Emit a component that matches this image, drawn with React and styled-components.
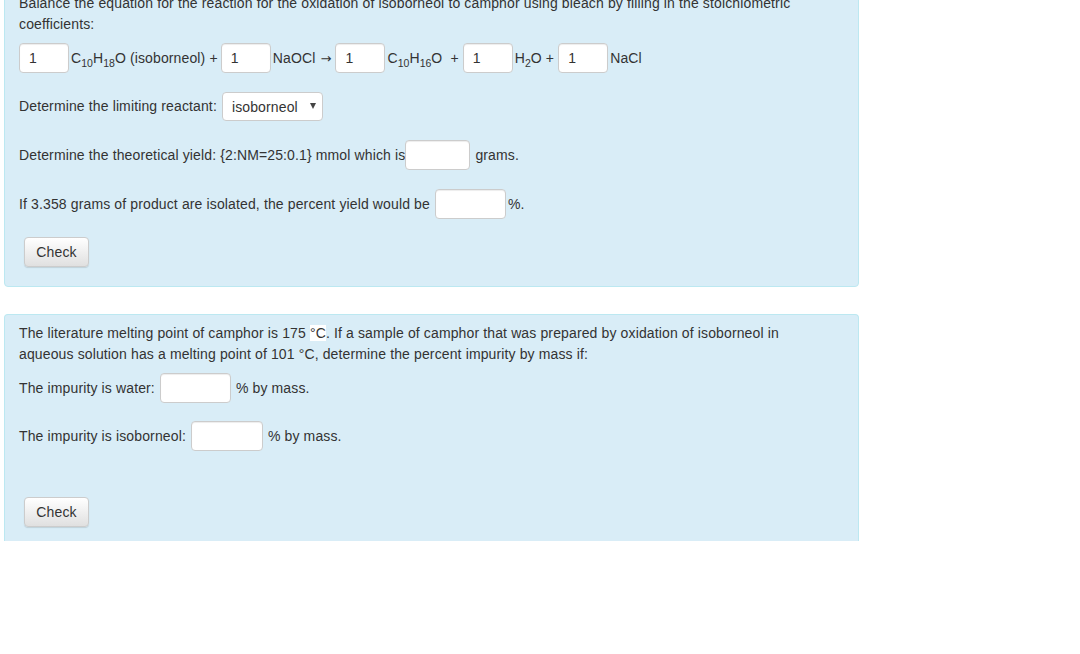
import React from "react";
import styled, { createGlobalStyle } from "styled-components";

const Global = createGlobalStyle`
  html, body { margin: 0; padding: 0; background: #fff; }
  body {
    font-family: "Liberation Sans", Arial, Helvetica, sans-serif;
    font-size: 14px;
    line-height: 21px;
    letter-spacing: 0.13px;
    color: #333;
    overflow: hidden;
  }
`;

const Page = styled.div`
  width: 855px;
  margin: -23px 0 0 4px;
`;

const Panel = styled.div`
  background: #d9edf7;
  border: 1px solid #bce8f1;
  border-radius: ${(p) => (p.$cut ? "4px 4px 0 0" : "4px")};
  ${(p) => (p.$cut ? "border-bottom: none;" : "")}
  padding: ${(p) => p.$pt}px 15px ${(p) => p.$pb}px 14px;
  margin-bottom: ${(p) => p.$mb || 0}px;
`;

const Para = styled.div`
  margin: 0;
`;

const Row = styled.div`
  display: flex;
  align-items: center;
  height: ${(p) => p.$h || 30}px;
  margin-top: ${(p) => p.$mt}px;
  white-space: nowrap;
`;

const Field = styled.input`
  box-sizing: border-box;
  width: ${(p) => p.$w}px;
  height: 30px;
  margin: 0 ${(p) => p.$mr ?? 5}px 0 ${(p) => p.$ml ?? 0}px;
  padding: 0 9px;
  border: 1px solid #ccc;
  border-radius: 4px;
  background: #fff;
  box-shadow: inset 0 1px 1px rgba(0, 0, 0, 0.075);
  font-family: inherit;
  font-size: 14px;
  color: #333;
  outline: none;
`;

const Label = styled.span`
  margin-right: ${(p) => p.$mr ?? 0}px;
`;

const Sub = styled.sub`
  font-size: 10.5px;
  line-height: 0;
  vertical-align: -4px;
  letter-spacing: 0;
`;

const ArrowGlyph = styled.span`
  font-family: "DejaVu Sans", sans-serif;
  font-size: 13px;
  margin-left: 1px;
`;

const SelectWrap = styled.div`
  position: relative;
  margin-left: 5px;
`;

const Select = styled.select`
  box-sizing: border-box;
  width: 101px;
  height: 29px;
  padding: 0 20px 0 9px;
  border: 1px solid #ccc;
  border-radius: 4px;
  background: #fff;
  font-family: inherit;
  font-size: 14px;
  letter-spacing: 0.13px;
  color: #333;
  appearance: none;
  -webkit-appearance: none;
  outline: none;
`;

const Arrow = styled.span`
  position: absolute;
  right: 7px;
  top: 11px;
  width: 0;
  height: 0;
  border-left: 3.5px solid transparent;
  border-right: 3.5px solid transparent;
  border-top: 6px solid #444;
  pointer-events: none;
`;

const Button = styled.button`
  box-sizing: border-box;
  height: 30px;
  width: 65px;
  margin-left: 5px;
  padding: 0;
  border: 1px solid #ccc;
  border-radius: 4px;
  background: linear-gradient(to bottom, #ffffff 0%, #e0e0e0 100%);
  box-shadow: inset 0 1px 0 rgba(255, 255, 255, 0.15), 0 1px 1px rgba(0, 0, 0, 0.12);
  font-family: inherit;
  font-size: 14px;
  letter-spacing: 0.13px;
  color: #333;
  cursor: pointer;
`;

const Highlight = styled.span`
  background: #fff;
`;

export default function App() {
  return (
    <>
      <Global />
      <Page>
        <Panel $pt={15} $pb={19} $mb={27}>
          <Para>
            Balance the equation for the reaction for the oxidation of isoborneol to camphor using bleach by filling in the stoichiometric coefficients:
          </Para>
          <Row $mt={8}>
            <Field $w={50} $mr={2} defaultValue="1" />
            <Label $mr={3}>
              C<Sub>10</Sub>H<Sub>18</Sub>O (isoborneol) +
            </Label>
            <Field $w={50} $mr={2} defaultValue="1" />
            <Label $mr={4}>
              NaOCl <ArrowGlyph>→</ArrowGlyph>
            </Label>
            <Field $w={50} $mr={2} defaultValue="1" />
            <Label $mr={4}>
              C<Sub>10</Sub>H<Sub>16</Sub>O&nbsp; +
            </Label>
            <Field $w={50} $mr={2} defaultValue="1" />
            <Label $mr={4}>
              H<Sub>2</Sub>O +
            </Label>
            <Field $w={50} $mr={2} defaultValue="1" />
            <Label>NaCl</Label>
          </Row>
          <Row $mt={19} $h={29}>
            <Label>Determine the limiting reactant:</Label>
            <SelectWrap>
              <Select defaultValue="isoborneol">
                <option value="isoborneol">isoborneol</option>
                <option value="NaOCl">NaOCl</option>
              </Select>
              <Arrow />
            </SelectWrap>
          </Row>
          <Row $mt={19}>
            <Label>Determine the theoretical yield: {"{2:NM=25:0.1}"} mmol which is</Label>
            <Field $w={65} $ml={0} $mr={5} />
            <Label>grams.</Label>
          </Row>
          <Row $mt={19}>
            <Label>If 3.358 grams of product are isolated, the percent yield would be</Label>
            <Field $w={71} $ml={5} $mr={2} />
            <Label>%.</Label>
          </Row>
          <Row $mt={18}>
            <Button>Check</Button>
          </Row>
        </Panel>
        <Panel $pt={8} $pb={14} $cut>
          <Para>
            The literature melting point of camphor is 175 <Highlight>°C</Highlight>. If a sample of camphor that was prepared by oxidation of isoborneol in
            <br />
            aqueous solution has a melting point of 101 °C, determine the percent impurity by mass if:
          </Para>
          <Row $mt={8}>
            <Label>The impurity is water:</Label>
            <Field $w={71} $ml={5} $mr={5} />
            <Label>% by mass.</Label>
          </Row>
          <Row $mt={18}>
            <Label>The impurity is isoborneol:</Label>
            <Field $w={72} $ml={5} $mr={5} />
            <Label>% by mass.</Label>
          </Row>
          <Row $mt={46}>
            <Button>Check</Button>
          </Row>
        </Panel>
      </Page>
    </>
  );
}
